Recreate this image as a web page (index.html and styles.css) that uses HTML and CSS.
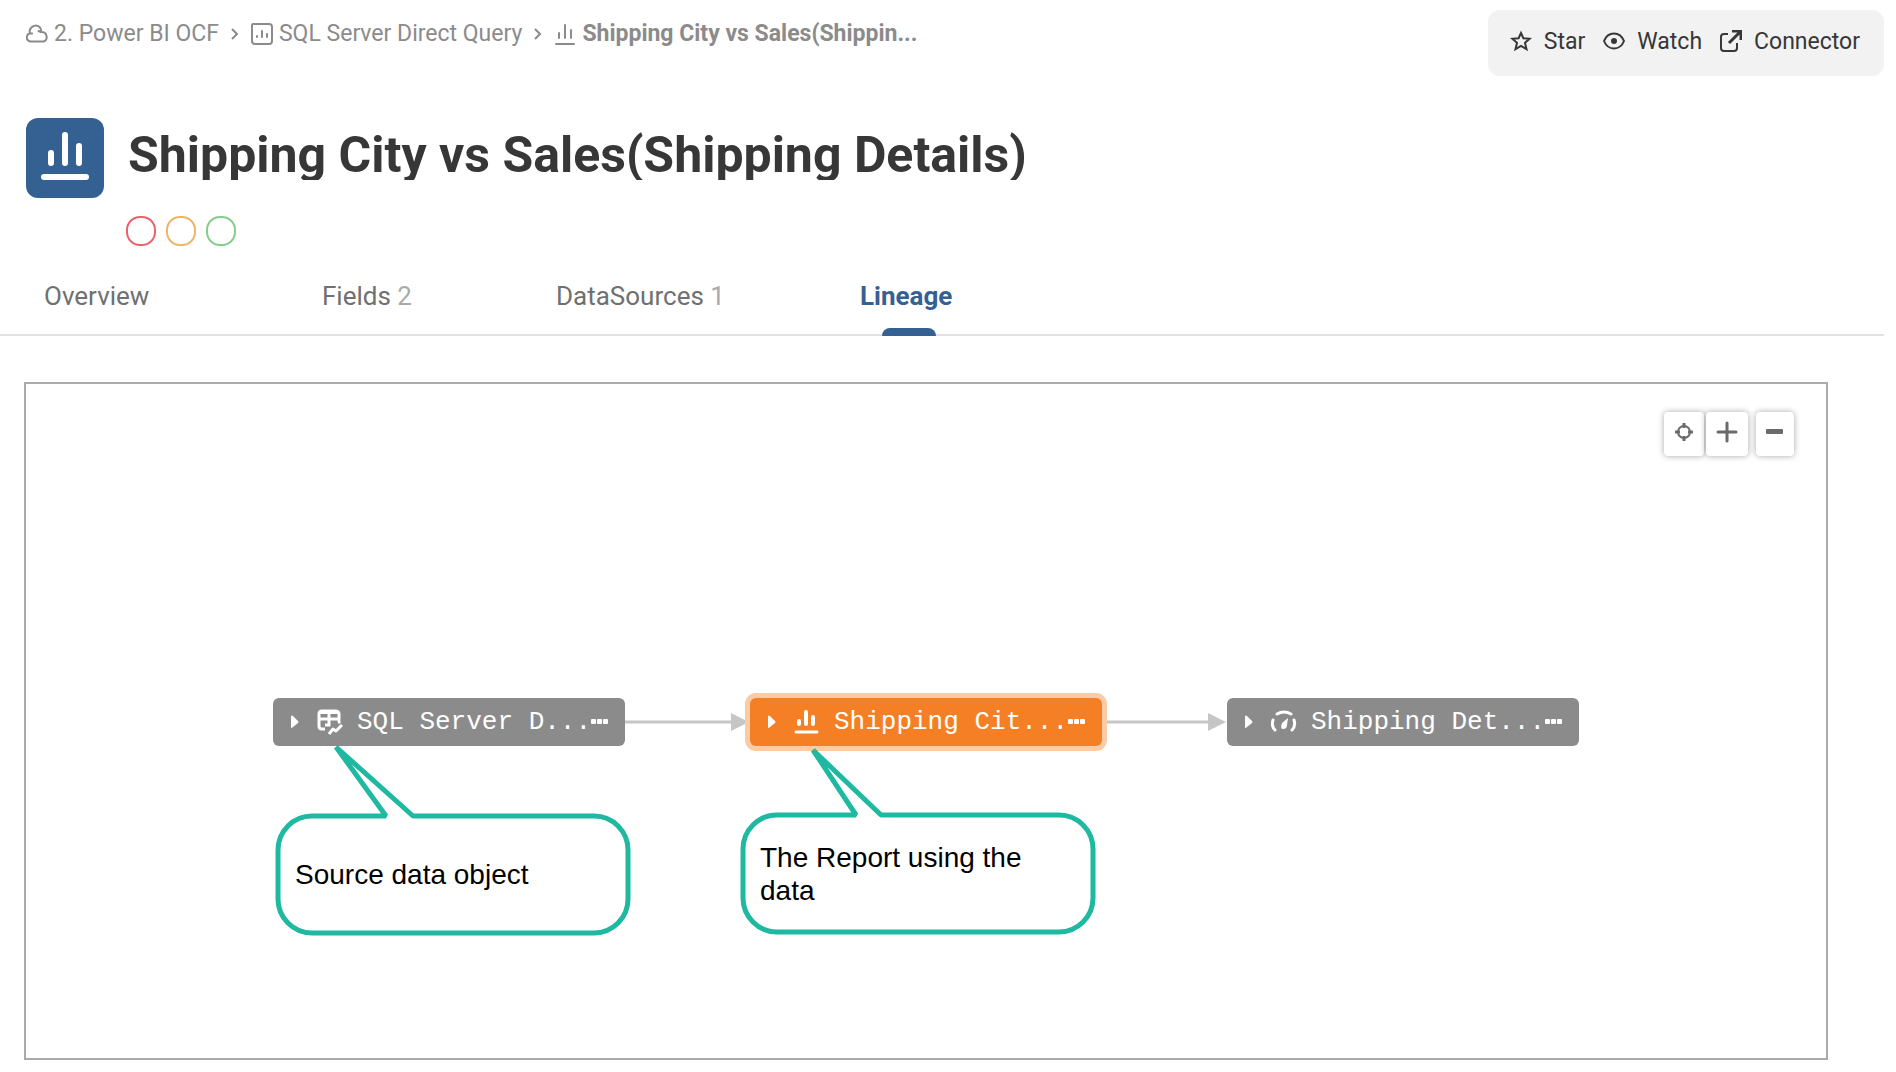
FILE: index.html
```html
<!DOCTYPE html>
<html lang="en">
<head>
<meta charset="utf-8">
<meta name="viewport" content="width=device-width, initial-scale=1">
<title>Shipping City vs Sales(Shipping Details)</title>
<link rel="stylesheet" href="styles.css">
</head>
<body>
<header class="topbar">
  <nav class="crumbs" aria-label="Breadcrumb">
    <a class="crumb" href="#ocf">
      <svg class="icon" width="22" height="22" viewBox="0 0 22 22" fill="none" stroke="currentColor" stroke-width="2" stroke-linecap="round"><path d="M5 18.500C-.5 18-.5 11.500 4 10.200C2.500 6 6.500 2.500 10 2.600C13.500 2.700 15.500 5.500 15 9C21.500 8.500 22.500 17.500 17.500 18.500ZM4 10.200L6 10.500M15 9L12.500 8"/></svg>
      <span>2. Power BI OCF</span>
    </a>
    <svg class="chevron" width="8" height="14" viewBox="0 0 8 14" fill="none" stroke="currentColor" stroke-width="2"><path d="M1 2l5 5-5 5"/></svg>
    <a class="crumb" href="#direct-query">
      <svg class="icon" width="22" height="22" viewBox="0 0 22 22" fill="none" stroke="currentColor" stroke-width="2" stroke-linecap="round"><path d="M2 1H18Q21 1 21 4V18Q21 21 18 21H4Q1 21 1 18V2Q1 1 2 1Z"/><path d="M6 13v1M11 8v6M16 11v3"/></svg>
      <span>SQL Server Direct Query</span>
    </a>
    <svg class="chevron" width="8" height="14" viewBox="0 0 8 14" fill="none" stroke="currentColor" stroke-width="2"><path d="M1 2l5 5-5 5"/></svg>
    <a class="crumb current" href="#report" aria-current="page">
      <svg class="icon" width="22" height="22" viewBox="0 0 22 22" fill="none" stroke="currentColor" stroke-width="2" stroke-linecap="round"><path d="M5 10v5M11 2v13M17 7v8M2 21h18"/></svg>
      <span>Shipping City vs Sales(Shippin...</span>
    </a>
  </nav>
  <div class="actions">
    <button class="action" type="button">
      <svg class="icon" width="22" height="22" viewBox="0 0 22 22" fill="none" stroke="currentColor" stroke-width="2" stroke-linejoin="miter"><path d="M11 3L13.400 8.200L19.600 8.700L15 12.800L16.500 19.200L11 15.900L5.500 19.200L7 12.800L2.400 8.700L8.600 8.200Z"/></svg>
      <span>Star</span>
    </button>
    <button class="action" type="button">
      <svg class="icon" width="22" height="22" viewBox="0 0 22 22" fill="none" stroke="currentColor" stroke-width="2"><path d="M1 11Q4 3.500 11 3.500T21 11Q18 18.500 11 18.500T1 11Z"/><circle cx="11" cy="11" r="3" fill="currentColor" stroke="none"/></svg>
      <span>Watch</span>
    </button>
    <button class="action" type="button">
      <svg class="icon" width="22" height="22" viewBox="0 0 22 22" fill="none" stroke="currentColor" stroke-width="2"><path d="M8 4H4Q1 4 1 7V18Q1 21 4 21H14Q17 21 17 18V13"/><path d="M12 1H21V10M20.500 1.500L9 13" stroke-width="3"/></svg>
      <span>Connector</span>
    </button>
  </div>
</header>

<section class="heading">
  <svg class="badge" width="78" height="80" viewBox="0 0 78 80" fill="none" stroke="#fff" stroke-width="6" stroke-linecap="round"><path d="M25 35v10M39 17v28M53 28v17M18 59h42"/></svg>
  <h1 class="title">Shipping City vs Sales(Shipping Details)</h1>
  <div class="flags">
    <button class="flag red" type="button" aria-label="Deprecate"></button>
    <button class="flag amber" type="button" aria-label="Warn"></button>
    <button class="flag green" type="button" aria-label="Endorse"></button>
  </div>
</section>

<nav class="tabs" aria-label="Sections">
  <a class="tab" href="#overview">Overview</a>
  <a class="tab" href="#fields">Fields <span class="count">2</span></a>
  <a class="tab" href="#datasources">DataSources <span class="count">1</span></a>
  <a class="tab active" href="#lineage" aria-current="true">Lineage</a>
</nav>

<main class="canvas">
  <svg class="overlay" width="100%" height="100%" fill="none">
    <g stroke="#c6c6c6" stroke-width="3"><path d="M599 338H710M1076 338H1188"/></g>
    <path fill="#c6c6c6" d="M705 329L723 338L705 347ZM1182 329L1200 338L1182 347Z"/>
  </svg>

  <div class="node source">
    <svg width="10" height="14" viewBox="0 0 10 14" fill="currentColor"><path d="M1 1Q2 0 3 1L8 6Q9 7 8 8L3 12Q1 14 1 12Z"/></svg>
    <svg width="26" height="26" viewBox="0 0 26 26" fill="none" stroke="currentColor" stroke-width="2"><path d="M8 20H5Q2 20 2 17V5Q2 2 5 2H18Q22 2 22 5V13H21M2 10H22M12 4V16H8" stroke-width="3"/><path d="M2 4H22"/><path d="M12 25L16 20L19 22L25 16" stroke-width="3" stroke-linejoin="round"/></svg>
    <span class="label">SQL Server D...</span>
    <button class="more" type="button" aria-label="More"><svg width="18" height="6" viewBox="0 0 18 6" fill="currentColor"><rect x="0" y="0" width="5" height="5" rx="1"/><rect x="6" y="0" width="5" height="5" rx="1"/><rect x="12" y="0" width="5" height="5" rx="1"/></svg></button>
  </div>
  <div class="node report">
    <svg width="10" height="14" viewBox="0 0 10 14" fill="currentColor"><path d="M1 1Q2 0 3 1L8 6Q9 7 8 8L3 12Q1 14 1 12Z"/></svg>
    <svg width="26" height="26" viewBox="0 0 26 26" fill="none" stroke="currentColor" stroke-width="4" stroke-linecap="round"><path d="M5 12v3M12 3v12M19 8v7"/><path d="M2 23h21" stroke-width="3"/></svg>
    <span class="label">Shipping Cit...</span>
    <button class="more" type="button" aria-label="More"><svg width="18" height="6" viewBox="0 0 18 6" fill="currentColor"><rect x="0" y="0" width="5" height="5" rx="1"/><rect x="6" y="0" width="5" height="5" rx="1"/><rect x="12" y="0" width="5" height="5" rx="1"/></svg></button>
  </div>
  <div class="node dashboard">
    <svg width="10" height="14" viewBox="0 0 10 14" fill="currentColor"><path d="M1 1Q2 0 3 1L8 6Q9 7 8 8L3 12Q1 14 1 12Z"/></svg>
    <svg width="26" height="26" viewBox="0 0 26 26" fill="none" stroke="currentColor" stroke-width="3" stroke-linecap="round"><path d="M6 5Q13 1 20 5M2 11Q0 17 4 21M23 11Q25 17 21 21"/><path d="M17 9L11 14Q9 20 12 20Q16 20 16 16Z" fill="currentColor" stroke="none"/></svg>
    <span class="label">Shipping Det...</span>
    <button class="more" type="button" aria-label="More"><svg width="18" height="6" viewBox="0 0 18 6" fill="currentColor"><rect x="0" y="0" width="5" height="5" rx="1"/><rect x="6" y="0" width="5" height="5" rx="1"/><rect x="12" y="0" width="5" height="5" rx="1"/></svg></button>
  </div>

  <svg class="overlay" width="100%" height="100%" fill="#fff" stroke="#1fb9a1" stroke-width="5" stroke-linejoin="bevel">
    <path d="M360 432L310 363L387 432H568A34 34 0 0 1 602 466V515A34 34 0 0 1 568 549H286A34 34 0 0 1 252 515V466A34 34 0 0 1 286 432Z"/>
    <path d="M830 431L787 366L855 431H1033A34 34 0 0 1 1067 465V514A34 34 0 0 1 1033 548H751A34 34 0 0 1 717 514V465A34 34 0 0 1 751 431Z"/>
  </svg>
  <p class="note source-note">Source data object</p>
  <p class="note report-note">The Report using the data</p>

  <div class="zoom">
    <button class="tool" type="button" aria-label="Center"><svg width="20" height="20" viewBox="0 0 20 20" fill="none" stroke="currentColor"><circle cx="10" cy="10" r="6" stroke-width="2"/><path d="M10 1v5M10 14v5M1 10h5M14 10h5" stroke-width="3"/></svg></button>
    <button class="tool wide" type="button" aria-label="Zoom in"><svg width="22" height="22" viewBox="0 0 22 22" fill="none" stroke="currentColor" stroke-width="3" stroke-linecap="round"><path d="M11 2v18M2 11h18"/></svg></button>
    <button class="tool apart" type="button" aria-label="Zoom out"><svg width="20" height="22" viewBox="0 0 20 22" fill="currentColor"><rect x="1" y="8" width="17" height="5" rx="1"/></svg></button>
  </div>
</main>
</body>
</html>
```
FILE: styles.css
```css
* {
  box-sizing: border-box;
}

body {
  margin: 0;
  min-height: 100vh;
  display: flex;
  flex-direction: column;
  background: #fff;
  color: #373737;
  font-family: Roboto, "Liberation Sans", sans-serif;
  font-size: 23px;
}

button {
  margin: 0;
  padding: 0;
  border: 0;
  background: none;
  color: inherit;
  font: inherit;
  cursor: pointer;
}

a {
  color: inherit;
  text-decoration: none;
}

svg {
  display: block;
  flex: none;
}

/* Top bar */
.topbar {
  display: flex;
  justify-content: space-between;
  align-items: flex-start;
  padding: 10px 12px 0 26px;
}

.crumbs {
  display: flex;
  align-items: center;
  gap: 12px;
  padding-top: 10px;
  line-height: 28px;
  color: #8b8b8b;
  white-space: nowrap;
}

.crumb {
  display: flex;
  align-items: center;
  gap: 6px;
}

.current {
  font-weight: 700;
}

.actions {
  display: flex;
  align-items: center;
  gap: 18px;
  height: 66px;
  padding: 0 24px 4px 22px;
  border-radius: 12px;
  background: #f2f2f2;
}

.action {
  display: flex;
  align-items: center;
  gap: 12px;
}

/* Title */
.heading {
  display: grid;
  grid-template-columns: 78px 1fr;
  column-gap: 24px;
  padding: 42px 26px 0;
}

.badge {
  border-radius: 12px;
  background: #356192;
}

.title {
  margin: 0;
  height: 62px;
  overflow: hidden;
  font-size: 50px;
  line-height: 74px;
  white-space: nowrap;
}

.flags {
  grid-column: 2;
  display: flex;
  gap: 10px;
  padding-top: 18px;
  margin-left: -2px;
}

.flag {
  width: 30px;
  height: 30px;
  border: 2px solid;
  border-radius: 14px;
}

.red {
  color: #ea636b;
}

.amber {
  color: #efb567;
}

.green {
  color: #83ce8c;
}

/* Tabs */
.tabs {
  display: grid;
  grid-template-columns: 278px 234px 304px 98px;
  height: 90px;
  margin-right: 12px;
  padding-left: 44px;
  border-bottom: 2px solid #e1e1e1;
  color: #707070;
  font-size: 26px;
  line-height: 32px;
}

.tab {
  position: relative;
  padding-top: 34px;
  white-space: nowrap;
}

.count {
  color: #aaa;
}

.active {
  color: #356192;
  font-weight: 700;
}

.active::after {
  content: "";
  position: absolute;
  left: 22px;
  bottom: -2px;
  width: 54px;
  height: 8px;
  border-radius: 8px 8px 0 0;
  background: #356192;
}

/* Lineage diagram */
.canvas {
  position: relative;
  flex: 1;
  min-height: 600px;
  margin: 46px 68px 12px 24px;
  border: 2px solid #aaa;
}

.overlay {
  position: absolute;
  inset: 0;
  pointer-events: none;
}

.node {
  position: absolute;
  top: 314px;
  width: 352px;
  height: 48px;
  display: flex;
  align-items: center;
  padding-left: 17px;
  border-radius: 6px;
  background: #8b8b8b;
  color: #fff;
  font-family: "Liberation Mono", monospace;
  font-size: 26px;
  white-space: nowrap;
}

.node .label {
  width: 234px;
  margin-left: 14px;
}

.node svg + svg {
  margin-left: 17px;
}

.source {
  left: 247px;
}

.report {
  left: 724px;
  background: #f57f24;
  box-shadow: 0 0 0 5px #fbcba5;
}

.dashboard {
  left: 1201px;
}

.note {
  position: absolute;
  display: flex;
  align-items: center;
  width: 300px;
  height: 118px;
  margin: 0;
  color: #000;
  font-family: "Liberation Sans", sans-serif;
  font-size: 28px;
  line-height: 33px;
}

.source-note {
  left: 269px;
  top: 431px;
}

.report-note {
  left: 734px;
  top: 431px;
}

.zoom {
  position: absolute;
  top: 28px;
  right: 32px;
  display: flex;
  gap: 2px;
  color: #6b6b6b;
}

.tool {
  display: flex;
  justify-content: center;
  align-items: center;
  width: 40px;
  height: 44px;
  padding-bottom: 4px;
  border-radius: 4px;
  background: #fff;
  box-shadow: 0 0 6px rgba(0, 0, 0, 0.35);
}

.wide {
  width: 42px;
}

.apart {
  width: 38px;
  margin-left: 6px;
}
```
